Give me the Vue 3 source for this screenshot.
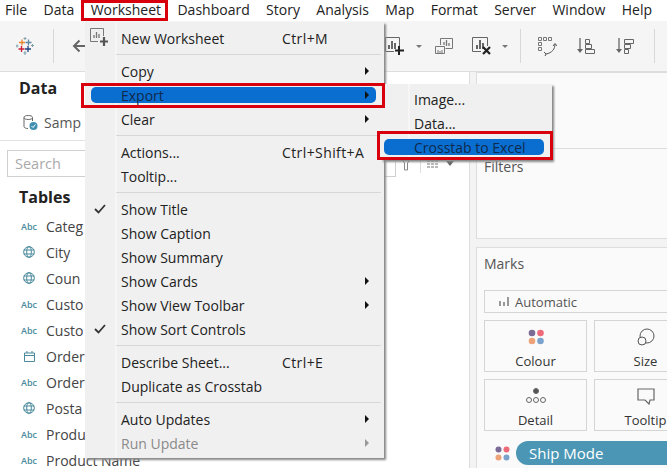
<template>
  <div class="page">
    <nav class="menubar">
      <span v-for="m in menus" :key="m" class="menubar-item">{{ m }}</span>
    </nav>

    <div class="toolbar">
      <svg class="logo" width="18" height="18" viewBox="0 0 18 18" fill="none" stroke-width="1.3">
        <path d="M6 2.500v6M3 5.500h6" stroke="#e8862d" />
        <path d="M12.500 2.500v6M9.500 5.500h6" stroke="#5f8aa0" />
        <path d="M5.500 9v6M2.500 12h6" stroke="#c72035" />
        <path d="M12 9v6M9 12h6" stroke="#1f447e" />
        <path d="M9 0v3M7.500 1.500h3M1 7.500v3M0 9h2.500M16.500 7v3M15 8.500h3M9 14v4M7.500 16h3" stroke="#7f9fab" stroke-width="1" />
      </svg>
      <span class="tool-sep first"></span>
      <svg class="back" width="14" height="14" viewBox="0 0 14 14" fill="none" stroke="#666" stroke-width="2">
        <path d="M14 7H2M7.500 1.500L2 7l5.500 5.500" />
      </svg>

      <svg class="tool t1" width="19" height="18" viewBox="0 0 19 18" fill="none" stroke="#666">
        <path d="M14.500 9V.500H.500v14H9" />
        <path d="M4 12V8M7 12V4M10 12V6" stroke-width="2" />
        <path d="M14 9v9M10 13.500h9" stroke="#222" stroke-width="2" />
      </svg>
      <i class="drop d1"></i>
      <svg class="tool t2" width="18" height="17" viewBox="0 0 18 17" fill="none" stroke="#777">
        <path d="M5.500 7V.500h12v10h-7" />
        <path d="M9 7V4M11.500 8V2M14 8V5" stroke-width="1.300" />
        <path d="M.500 8.500h9v7h-9z" />
        <path d="M3 15v-3M5 15v-2M7 15v-3" />
      </svg>
      <svg class="tool t3" width="20" height="18" viewBox="0 0 20 18" fill="none" stroke="#666">
        <path d="M15.500 9V.500H.500v14H9" />
        <path d="M5 12V8M8 12V3M11 12V6" stroke-width="2" />
        <path d="M11 10l7 7M18 10l-7 7" stroke="#222" stroke-width="2.200" />
      </svg>
      <i class="drop d2"></i>
      <span class="tool-sep s2"></span>
      <svg class="tool t4" width="19" height="19" viewBox="0 0 19 19" fill="none" stroke="#777">
        <path d="M.500.500h3v3h-3zM5.500.500h3v3h-3zM10.500.500h3v3h-3zM.500 5.500h3v3h-3zM.500 10.500h3v3h-3z" />
        <path d="M17 7c0 5-3 9-9 10M15 9l2-2.500L19 9M6 15l2 2-1 2" stroke="#555" />
      </svg>
      <svg class="tool t5" width="18" height="17" viewBox="0 0 18 17" fill="none" stroke="#666">
        <path d="M3 0v13" stroke-width="1.300" />
        <path d="M0 11h6l-3 4z" fill="#666" stroke="none" />
        <path d="M8.500 1.500h4v4h-4zM8.500 6.500h6v4h-6zM8.500 11.500h9v4h-9z" />
      </svg>
      <svg class="tool t6" width="18" height="17" viewBox="0 0 18 17" fill="none" stroke="#666">
        <path d="M3 0v13" stroke-width="1.300" />
        <path d="M0 11h6l-3 4z" fill="#666" stroke="none" />
        <path d="M8.500 1.500h9v4h-9zM8.500 6.500h6v4h-6zM8.500 11.500h4v4h-4z" />
      </svg>
      <span class="tool-sep s3"></span>
    </div>

    <div class="workspace">
      <aside class="data-pane">
        <h2 class="pane-title">Data</h2>
        <div class="source">
          <svg width="15" height="17" viewBox="0 0 15 17" fill="none">
            <path d="M9.500 4v3M1 3.500v9c0 1.400 2 2 4 2M9.500 3.500c0 1.300-1.900 2-4.250 2S1 4.800 1 3.500s1.900-2 4.250-2 4.250.7 4.250 2z" stroke="#666" />
            <circle cx="10.500" cy="12" r="4" fill="#3f8fb0" />
            <path d="M8.500 12l1.500 1.500 2.500-3" stroke="#fff" />
          </svg>
          <span>Samp</span>
        </div>
        <div class="search-row">
          <div class="search">Search</div>
          <svg class="filter-icon" width="12" height="14" viewBox="0 0 12 14" fill="none" stroke="#888">
            <path d="M.500.500h11L7.500 6v7h-3V6z" />
          </svg>
          <span class="search-sep"></span>
          <svg class="list-icon" width="12" height="8" viewBox="0 0 12 8" fill="none" stroke="#777">
            <path d="M0 1h12M0 4h12M0 7h12" stroke-dasharray="3 1" />
          </svg>
          <i class="drop list-drop"></i>
        </div>
        <h2 class="pane-title tables">Tables</h2>
        <ul class="fields">
          <li v-for="(f, i) in fields" :key="i">
            <span class="field-type">
              <span v-if="f.type === 'abc'" class="abc">Abc</span>
              <svg v-else-if="f.type === 'geo'" width="12" height="12" viewBox="0 0 12 12" fill="none" stroke="#4a8a9c">
                <circle cx="6" cy="6" r="5.300" />
                <ellipse cx="6" cy="6" rx="2.300" ry="5.300" />
                <path d="M.700 4h10.600M.700 8h10.600" />
              </svg>
              <svg v-else width="11" height="11" viewBox="0 0 11 11" fill="none" stroke="#4a8a9c">
                <path d="M.500 2h10v8.500H.500zM.500 4.500h10M3 0v2M8 0v2" />
              </svg>
            </span>
            <span>{{ f.name }}</span>
          </li>
        </ul>
      </aside>

      <section class="cards">
        <div class="card pages"></div>
        <div class="card filters">Filters</div>
        <div class="card marks">
          <div class="marks-title">Marks</div>
          <div class="mark-type">
            <svg width="10" height="9" viewBox="0 0 10 9" fill="#999">
              <path d="M0 4h2v5H0zM4 5h2v4H4zM8 0h2v9H8z" />
            </svg>
            Automatic
          </div>
          <div class="mark-grid">
            <div class="mark-btn">
              <svg width="16" height="16" viewBox="0 0 16 16">
                <circle cx="4" cy="4" r="3.300" fill="#7b6a96" />
                <circle cx="12.500" cy="4" r="3.300" fill="#ed6a7a" />
                <circle cx="4" cy="12" r="3.300" fill="#eea27a" />
                <circle cx="12.500" cy="12" r="3.300" fill="#7ba2cc" />
              </svg>
              <span>Colour</span>
            </div>
            <div class="mark-btn">
              <svg width="18" height="18" viewBox="0 0 18 18" fill="none" stroke="#555">
                <circle cx="10" cy="8" r="7" />
                <circle cx="5" cy="13" r="4" fill="#fafafa" />
              </svg>
              <span>Size</span>
            </div>
            <div class="mark-btn">
              <svg width="20" height="16" viewBox="0 0 20 16" fill="none" stroke="#666">
                <circle cx="10" cy="3" r="2.500" fill="#555" />
                <circle cx="3" cy="12" r="2.500" />
                <circle cx="10" cy="12" r="2.500" />
                <circle cx="17" cy="12" r="2.500" />
              </svg>
              <span>Detail</span>
            </div>
            <div class="mark-btn">
              <svg width="18" height="17" viewBox="0 0 18 17" fill="none" stroke="#666" stroke-width="1.200">
                <path d="M1 1h16v11h-4l-1 4-4-4H1z" />
              </svg>
              <span>Tooltip</span>
            </div>
          </div>
          <div class="pill-row">
            <svg width="15" height="15" viewBox="0 0 15 15">
              <circle cx="3.500" cy="3.500" r="3" fill="#7b6a96" />
              <circle cx="11.500" cy="3.500" r="3" fill="#ed6a7a" />
              <circle cx="3.500" cy="11.500" r="3" fill="#eea27a" />
              <circle cx="11.500" cy="11.500" r="3" fill="#7ba2cc" />
            </svg>
            <div class="pill">Ship Mode</div>
          </div>
        </div>
      </section>
    </div>

    <div class="menu">
      <svg class="new-sheet-icon" width="19" height="19" viewBox="0 0 19 19" fill="none" stroke="#777">
        <path d="M13.500 8V.500H.500v13H8" />
        <path d="M4 10V7M6.500 10V4M9 10V6" stroke-width="1.300" />
        <path d="M14 9v9M10 13.500h8" stroke="#555" stroke-width="2.200" />
      </svg>
      <template v-for="(item, i) in worksheetItems" :key="i">
        <div v-if="item.sep" class="menu-sep"></div>
        <div v-else class="menu-row" :class="{ active: item.active, disabled: item.disabled }">
          <svg v-if="item.check" class="check" width="12" height="10" viewBox="0 0 12 10" fill="none" stroke="#333" stroke-width="1.800">
            <path d="M1 5l3.500 3.500L11 1" />
          </svg>
          <span class="menu-label">{{ item.label }}</span>
          <span v-if="item.keys" class="menu-keys">{{ item.keys }}</span>
          <i v-if="item.more" class="more"></i>
        </div>
      </template>
    </div>

    <div class="submenu">
      <div class="menu-row">
        <span class="menu-label">Image...</span>
      </div>
      <div class="menu-row">
        <span class="menu-label">Data...</span>
      </div>
      <div class="menu-row active">
        <span class="menu-label">Crosstab to Excel</span>
      </div>
    </div>

    <div class="callout worksheet-box"></div>
    <div class="callout export-box"></div>
    <div class="callout crosstab-box"></div>
  </div>
</template>

<script setup>
const menus = ['File', 'Data', 'Worksheet', 'Dashboard', 'Story', 'Analysis', 'Map', 'Format', 'Server', 'Window', 'Help']

// names stop where the open menu covers them in the picture
const fields = [
  { name: 'Categ', type: 'abc' },
  { name: 'City', type: 'geo' },
  { name: 'Coun', type: 'geo' },
  { name: 'Custo', type: 'abc' },
  { name: 'Custo', type: 'abc' },
  { name: 'Order', type: 'date' },
  { name: 'Order', type: 'abc' },
  { name: 'Posta', type: 'geo' },
  { name: 'Produ', type: 'abc' },
  { name: 'Product Name', type: 'abc' },
]

const worksheetItems = [
  { label: 'New Worksheet', keys: 'Ctrl+M' },
  { sep: true },
  { label: 'Copy', more: true },
  { label: 'Export', more: true, active: true },
  { label: 'Clear', more: true },
  { sep: true },
  { label: 'Actions...', keys: 'Ctrl+Shift+A' },
  { label: 'Tooltip...' },
  { sep: true },
  { label: 'Show Title', check: true },
  { label: 'Show Caption' },
  { label: 'Show Summary' },
  { label: 'Show Cards', more: true },
  { label: 'Show View Toolbar', more: true },
  { label: 'Show Sort Controls', check: true },
  { sep: true },
  { label: 'Describe Sheet...', keys: 'Ctrl+E' },
  { label: 'Duplicate as Crosstab' },
  { sep: true },
  { label: 'Auto Updates', more: true },
  { label: 'Run Update', more: true, disabled: true },
]
</script>

<style>
html, body {
  margin: 0;
  overflow: hidden;
}
</style>

<style scoped>
.page {
  position: relative;
  width: 667px;
  height: 468px;
  overflow: hidden;
  background: #fff;
  color: #333;
  font-family: "Open Sans", "Noto Sans", sans-serif;
  font-size: 14px;
}

.menubar {
  display: flex;
  height: 21px;
  padding-left: 5px;
  line-height: 20px;
  color: #222;
  background: #fff;
}
.menubar-item {
  margin-right: 16.400px;
  white-space: nowrap;
}

.toolbar {
  display: flex;
  align-items: center;
  height: 51px;
  box-sizing: border-box;
  background: #f5f5f5;
  border-bottom: 1px solid #ddd;
}
.logo { margin-left: 16px; }
.tool-sep {
  width: 1px;
  height: 34px;
  background: #d8d8d8;
}
.tool-sep.first { margin-left: 19px; }
.back { margin-left: 18px; }
.tool { flex: none; }
.t1 { margin-left: 299px; }
.drop {
  width: 0;
  height: 0;
  border-left: 3px solid transparent;
  border-right: 3px solid transparent;
  border-top: 3px solid #777;
}
.d1 { margin-left: 12px; }
.t2 { margin-left: 13px; }
.t3 { margin-left: 19px; }
.d2 { margin-left: 10px; }
.s2 { margin-left: 12px; }
.t4 { margin-left: 17px; }
.t5 { margin-left: 20px; }
.t6 { margin-left: 21px; }
.s3 { margin-left: 20px; }

.workspace {
  display: flex;
  height: 396px;
  background: #f3f3f3;
}

.data-pane {
  width: 470px;
  flex: none;
  background: #fff;
  border-right: 1px solid #ddd;
  box-sizing: border-box;
}
.pane-title {
  margin: 0;
  padding-left: 19px;
  font-size: 16px;
  font-weight: 700;
  color: #222;
  line-height: 20px;
}
.data-pane > .pane-title:first-child { padding-top: 6px; }
.source {
  display: flex;
  align-items: center;
  gap: 6px;
  height: 38px;
  padding: 2px 0 0 23px;
  box-sizing: border-box;
  border-bottom: 1px solid #e3e3e3;
  margin-top: 5px;
  color: #555;
}
.search-row {
  display: flex;
  align-items: center;
  height: 27px;
  margin-top: 9px;
  padding-left: 7px;
}
.search {
  width: 389px;
  height: 27px;
  box-sizing: border-box;
  border: 1px solid #d0d0d0;
  padding-left: 7px;
  line-height: 25px;
  font-size: 14.500px;
  color: #aaa;
}
.filter-icon { margin-left: 4px; }
.search-sep {
  width: 1px;
  height: 18px;
  background: #ddd;
  margin-left: 8px;
}
.list-icon { margin-left: 6px; }
.list-drop { margin-left: 7px; border-top-color: #666; border-left-width: 4px; border-right-width: 4px; border-top-width: 5px; }
.pane-title.tables { margin-top: 10px; }
.fields {
  list-style: none;
  margin: 6px 0 0;
  padding: 0;
}
.fields li {
  display: flex;
  align-items: center;
  height: 26px;
  white-space: nowrap;
  color: #444;
}
.field-type {
  display: flex;
  justify-content: center;
  width: 18px;
  margin: 0 8px 0 20px;
}
.abc {
  font-size: 9px;
  font-weight: 600;
  color: #4a8a9c;
}

.cards {
  flex: 1;
  display: flex;
  flex-direction: column;
  margin-left: 6px;
  min-width: 0;
}
.card {
  background: #fafafa;
  border: 1px solid #ddd;
  border-right: 0;
  box-sizing: border-box;
}
.pages {
  height: 77px;
  flex: none;
}
.filters {
  height: 91px;
  flex: none;
  padding: 8px 0 0 7px;
  margin-top: -1px;
  color: #555;
}
.marks {
  flex: 1;
  margin-top: 8px;
  padding: 6px 0 0 7px;
  border-bottom: 0;
  overflow: hidden;
}
.marks-title { color: #555; height: 36px; line-height: 20px; }
.mark-type {
  display: flex;
  align-items: center;
  gap: 6px;
  width: 300px;
  height: 23px;
  box-sizing: border-box;
  padding-left: 14px;
  border: 1px solid #d5d5d5;
  font-size: 13px;
  color: #555;
}
.mark-grid {
  display: grid;
  grid-template-columns: 103px 103px;
  grid-auto-rows: 52px;
  gap: 7px;
  margin-top: 7px;
}
.mark-btn {
  display: grid;
  grid-template-rows: 28px 1fr;
  place-items: center;
  box-sizing: border-box;
  border: 1px solid #d5d5d5;
  color: #333;
  font-size: 13px;
  padding-top: 2px;
}
.pill-row {
  display: flex;
  align-items: center;
  gap: 6px;
  margin: 10px 0 0 11px;
}
.pill-row svg { flex: none; }
.pill {
  flex: none;
  width: 200px;
  height: 24px;
  line-height: 24px;
  padding-left: 13px;
  box-sizing: border-box;
  border-radius: 12px 0 0 12px;
  background: #4a96b4;
  color: #fff;
  font-size: 15px;
  font-weight: 500;
}

.menu, .submenu {
  position: absolute;
  box-sizing: border-box;
  background: #f0f0f0;
  box-shadow: 2px 2px 2px #888;
  color: #222;
}
.menu {
  left: 85px;
  top: 22px;
  width: 299px;
  height: 436px;
  padding: 4px 0 2px 31px;
}
.menu::before, .submenu::before {
  content: "";
  position: absolute;
  top: 0;
  bottom: 0;
  left: 30px;
  width: 2px;
  background: #f6f6f6;
}
.submenu::before { left: 27px; }
.new-sheet-icon {
  position: absolute;
  left: 5px;
  top: 6px;
}
.menu-row {
  position: relative;
  display: flex;
  align-items: center;
  height: 24px;
  padding-left: 5px;
  white-space: nowrap;
}
.menu-label { position: relative; }
.menu-row.active { color: #10294a; }
.menu-row.active::before {
  content: "";
  position: absolute;
  top: 4px;
  bottom: 4px;
  left: -25px;
  right: 8px;
  border-radius: 5px;
  background: #0a6ed1;
}
.menu-row.disabled { color: #8a8a8a; }
.check {
  position: absolute;
  left: -22px;
  top: 7px;
}
.menu-keys {
  position: absolute;
  left: 166px;
  letter-spacing: 0.400px;
}
.more {
  position: absolute;
  right: 15px;
  top: 8px;
  width: 0;
  height: 0;
  border-top: 4px solid transparent;
  border-bottom: 4px solid transparent;
  border-left: 4px solid #111;
}
.menu-row.disabled .more { border-left-color: #999; }
.menu-sep {
  height: 9px;
  position: relative;
}
.menu-sep::after {
  content: "";
  position: absolute;
  left: 0;
  right: 3px;
  top: 4px;
  height: 1px;
  background: #d7d7d7;
}
.submenu {
  left: 381px;
  top: 84px;
  width: 171px;
  height: 76px;
  padding: 3px 0 0 28px;
}

.callout {
  position: absolute;
  box-sizing: border-box;
  border: 3px solid #d8000c;
  pointer-events: none;
}
.worksheet-box { left: 81px; top: 0; width: 87px; height: 21px; }
.export-box { left: 81px; top: 83px; width: 304px; height: 25px; }
.crosstab-box { left: 377px; top: 131px; width: 176px; height: 29px; }
</style>
